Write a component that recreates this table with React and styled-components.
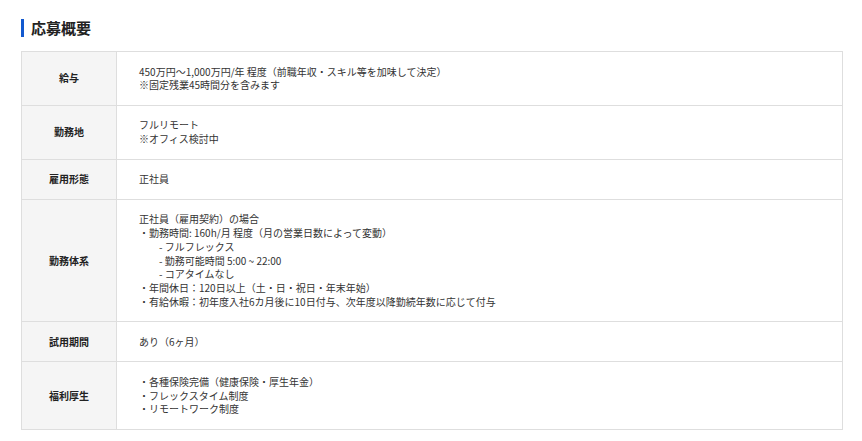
import React from "react";
import styled, { createGlobalStyle } from "styled-components";

const rows = [
  {
    label: "給与",
    lines: [
      "450万円～1,000万円/年 程度（前職年収・スキル等を加味して決定）",
      "※固定残業45時間分を含みます",
    ],
  },
  { label: "勤務地", lines: ["フルリモート", "※オフィス検討中"] },
  { label: "雇用形態", lines: ["正社員"] },
  {
    label: "勤務体系",
    lines: [
      "正社員（雇用契約）の場合",
      "・勤務時間: 160h/月 程度（月の営業日数によって変動）",
      "　　- フルフレックス",
      "　　- 勤務可能時間 5:00 ~ 22:00",
      "　　- コアタイムなし",
      "・年間休日：120日以上（土・日・祝日・年末年始）",
      "・有給休暇：初年度入社6カ月後に10日付与、次年度以降勤続年数に応じて付与",
    ],
  },
  { label: "試用期間", lines: ["あり（6ヶ月）"] },
  {
    label: "福利厚生",
    lines: [
      "・各種保険完備（健康保険・厚生年金）",
      "・フレックスタイム制度",
      "・リモートワーク制度",
    ],
  },
];

export default function App() {
  return (
    <>
      <GlobalStyle />
      <Page>
        <Heading>応募概要</Heading>
        <Table>
          <tbody>
            {rows.map((row) => (
              <tr key={row.label}>
                <Label>{row.label}</Label>
                <Value>
                  {row.lines.map((line, i) => (
                    <Line key={i}>{line}</Line>
                  ))}
                </Value>
              </tr>
            ))}
          </tbody>
        </Table>
      </Page>
    </>
  );
}

const GlobalStyle = createGlobalStyle`
  body {
    margin: 0;
    background: #fff;
    font-family: "Noto Sans CJK JP", "Noto Sans", sans-serif;
  }
`;

const Page = styled.div`
  padding: 19px 19px 0 21px;
`;

const Heading = styled.h2`
  margin: 0 0 14px;
  height: 18px;
  line-height: 18px;
  padding-left: 7px;
  border-left: 3px solid #1259cf;
  font-size: 15px;
  font-weight: 700;
  color: #222;
`;

const Table = styled.table`
  width: 100%;
  border-collapse: collapse;
  border: 1px solid #dedede;
`;

const Label = styled.th`
  width: 94px;
  padding: 12.6px 0;
  background: #f5f5f5;
  border: 1px solid #dedede;
  font-size: 10px;
  line-height: 13.8px;
  font-weight: 700;
  color: #222;
  text-align: center;
`;

const Value = styled.td`
  padding: 12.6px 22px;
  border: 1px solid #dedede;
  font-size: 10px;
  line-height: 13.8px;
  color: #333;
  text-align: left;
`;

const Line = styled.div`
  white-space: pre;
`;
